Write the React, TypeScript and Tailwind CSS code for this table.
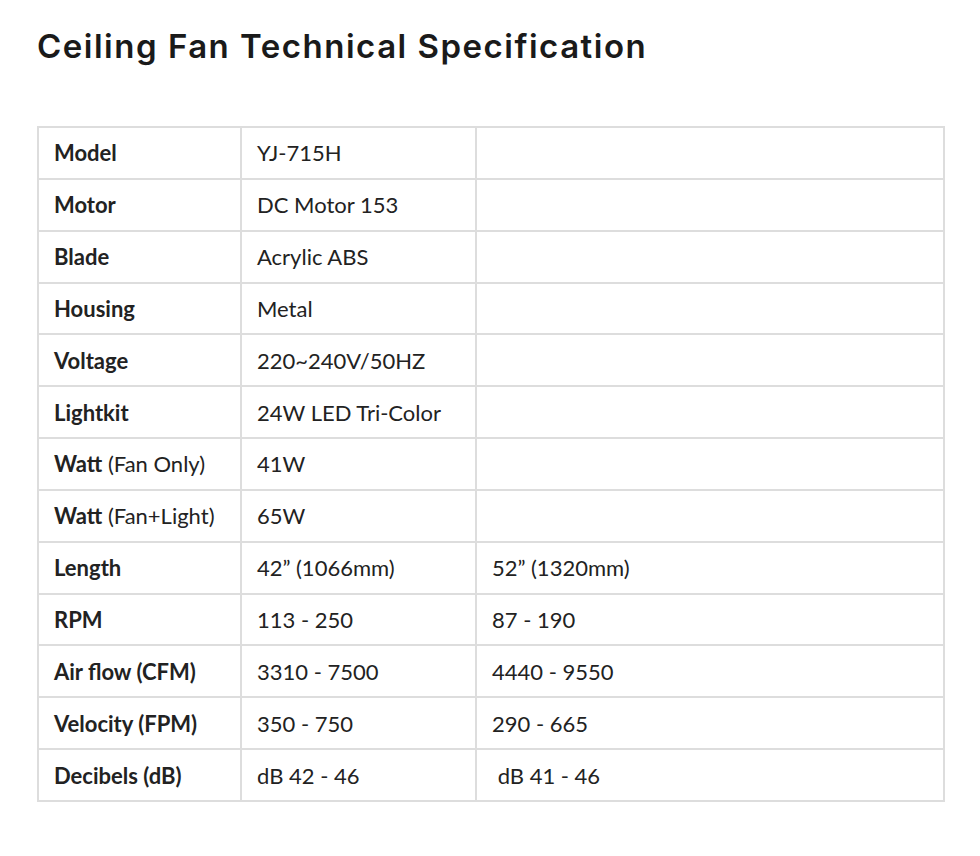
import React from "react";

const rows: [React.ReactNode, string, string][] = [
  [<b>Model</b>, "YJ-715H", ""],
  [<b>Motor</b>, "DC Motor 153", ""],
  [<b>Blade</b>, "Acrylic ABS", ""],
  [<b>Housing</b>, "Metal", ""],
  [<b>Voltage</b>, "220~240V/50HZ", ""],
  [<b>Lightkit</b>, "24W LED Tri-Color", ""],
  [<><b>Watt</b> (Fan Only)</>, "41W", ""],
  [<><b>Watt</b> (Fan+Light)</>, "65W", ""],
  [<b>Length</b>, "42\u201d (1066mm)", "52\u201d (1320mm)"],
  [<b>RPM</b>, "113 - 250", "87 - 190"],
  [<b>Air flow (CFM)</b>, "3310 - 7500", "4440 - 9550"],
  [<b>Velocity (FPM)</b>, "350 - 750", "290 - 665"],
  [<b>Decibels (dB)</b>, "dB 42 - 46", "\u00a0dB 41 - 46"],
];

export default function App() {
  return (
    <div className="w-[980px] h-[856px] bg-white pl-[37px] pt-[24px]">
      <h1 className="text-[33px] leading-[44px] font-semibold text-[#1a1a1a] tracking-[1.5px]" style={{ fontFamily: "Inter, 'Noto Sans', sans-serif" }}>
        Ceiling Fan Technical Specification
      </h1>
      <table
        className="mt-[58px] w-[908px] table-fixed border-collapse border-2 border-[#dddddd] text-[22px] text-[#222222]"
        style={{ fontFamily: "Lato, sans-serif" }}
      >
        <colgroup>
          <col className="w-[203px]" />
          <col className="w-[235px]" />
          <col />
        </colgroup>
        <tbody>
          {rows.map((r, i) => (
            <tr key={i} className="h-[51.85px]">
              <td className="border-2 border-[#dddddd] px-[15px] py-0 align-middle whitespace-nowrap [&_b]:font-bold">{r[0]}</td>
              <td className="border-2 border-[#dddddd] px-[15px] py-0 align-middle whitespace-nowrap">{r[1]}</td>
              <td className="border-2 border-[#dddddd] px-[15px] py-0 align-middle whitespace-nowrap">{r[2]}</td>
            </tr>
          ))}
        </tbody>
      </table>
    </div>
  );
}
